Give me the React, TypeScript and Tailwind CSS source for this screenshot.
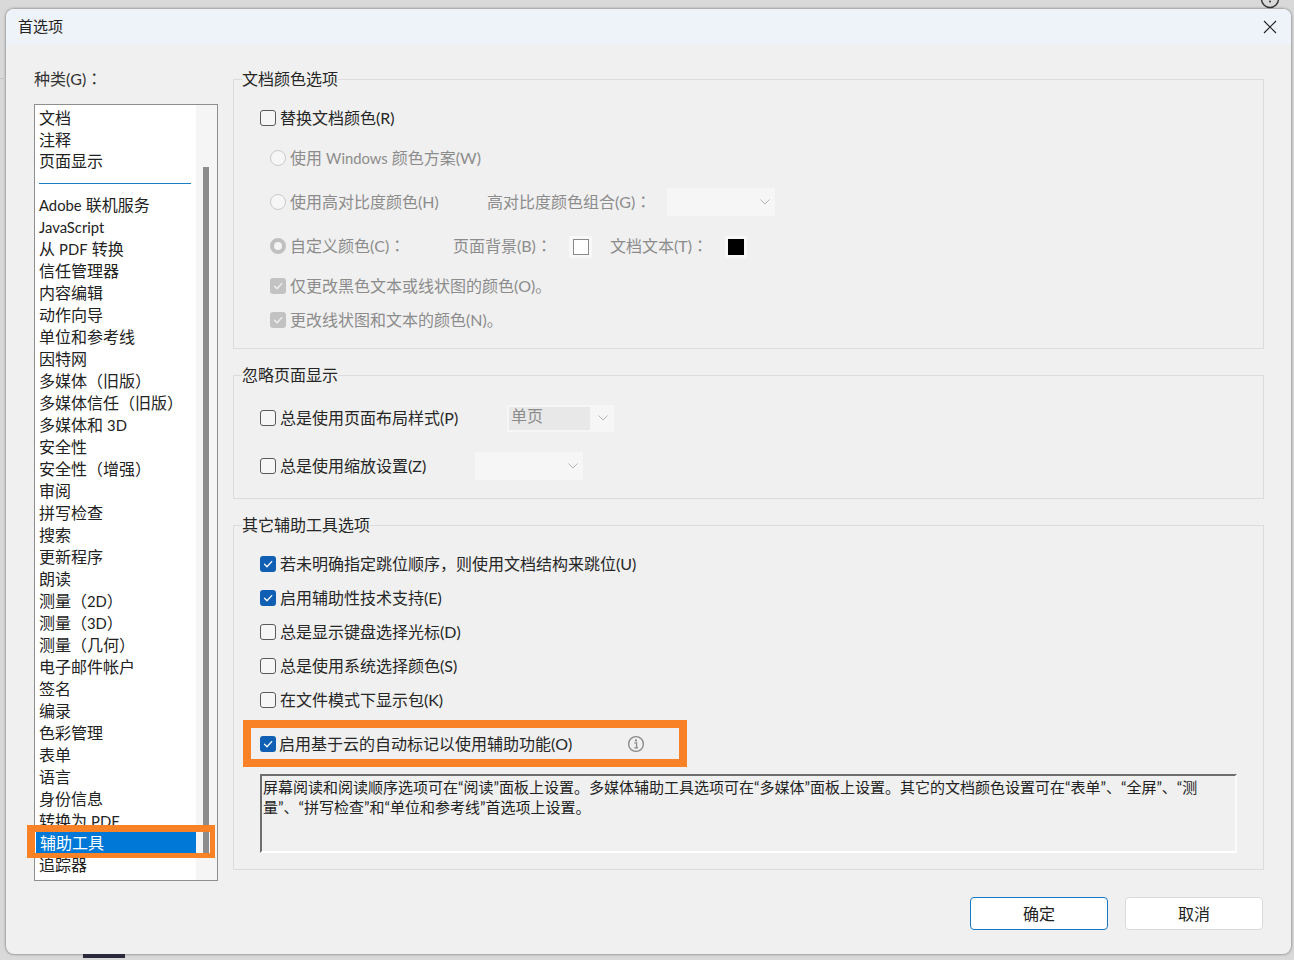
import React from "react";

const topItems = ["文档", "注释", "页面显示"];
const items = ["Adobe 联机服务","JavaScript","从 PDF 转换","信任管理器","内容编辑","动作向导","单位和参考线","因特网","多媒体（旧版）","多媒体信任（旧版）","多媒体和 3D","安全性","安全性（增强）","审阅","拼写检查","搜索","更新程序","朗读","测量（2D）","测量（3D）","测量（几何）","电子邮件帐户","签名","编录","色彩管理","表单","语言","身份信息","转换为 PDF","辅助工具","追踪器"];

function Mixed({ text }: { text: string }) {
  return (
    <>
      {text.split(/([A-Za-z0-9]+)/).map((part, i) =>
        i % 2 === 1 ? <span key={i} className="text-[14.8px]">{part}</span> : <React.Fragment key={i}>{part}</React.Fragment>
      )}
    </>
  );
}

function Tick({ color = "white" }: { color?: string }) {
  return (
    <svg width="12" height="12" viewBox="0 0 12 12" fill="none">
      <path d="M2.5 6.3 L5 8.7 L9.7 3.6" stroke={color} strokeWidth="1.3" strokeLinecap="round" strokeLinejoin="round" />
    </svg>
  );
}

function Check({ state = "off" }: { state?: "off" | "on" | "disabled" }) {
  if (state === "on")
    return <span className="flex h-4 w-4 shrink-0 items-center justify-center rounded-[3px] bg-[#0f5fb5]"><Tick /></span>;
  if (state === "disabled")
    return <span className="flex h-4 w-4 shrink-0 items-center justify-center rounded-[3px] bg-[#c2c2c2]"><Tick color="#f2f2f2" /></span>;
  return <span className="h-4 w-4 shrink-0 rounded-[3px] border border-[#5a5a5a] bg-[#f6f6f6]" />;
}

function Radio({ on = false }: { on?: boolean }) {
  return on ? (
    <span className="h-4 w-4 shrink-0 rounded-full border-[4px] border-[#c0c0c0] bg-[#f4f4f4]" />
  ) : (
    <span className="h-4 w-4 shrink-0 rounded-full border border-[#cbcbcb] bg-[#f6f6f6]" />
  );
}

function Chevron({ className = "" }: { className?: string }) {
  return (
    <svg className={className} width="12" height="8" viewBox="0 0 12 8" fill="none">
      <path d="M1.5 1.5 L6 6 L10.5 1.5" stroke="#b5b5b5" strokeWidth="1" />
    </svg>
  );
}

function Colon() {
  return <span className="font-['Noto_Sans_CJK_TC',sans-serif] leading-none">：</span>;
}

function CheckRow({ label, state, className = "" }: { label: string; state?: "off" | "on" | "disabled"; className?: string }) {
  return (
    <div className={`flex h-6 items-center gap-1 text-[#262626] ${className}`}>
      <Check state={state} />
      <span className="whitespace-nowrap">{label}</span>
    </div>
  );
}

function Section({ title, className, children }: { title: string; className: string; children: React.ReactNode }) {
  return (
    <fieldset className={`w-[1031px] border border-[#dcdcdc] ${className}`}>
      <legend className="ml-2 h-6 leading-6 text-[#262626]">{title}</legend>
      {children}
    </fieldset>
  );
}

export default function App() {
  return (
    <div className="relative h-[960px] w-[1294px] overflow-hidden bg-[#d9d9d9] pl-[6px] pt-[9px] font-['Lato','Noto_Sans_CJK_SC',sans-serif] text-[16px]">
      <svg className="absolute left-[1260px] top-[-11px]" width="20" height="20" viewBox="0 0 20 20" fill="none">
        <circle cx="10" cy="10" r="8.5" stroke="#333" strokeWidth="1.4" />
        <circle cx="10" cy="12.5" r="1" fill="#333" />
      </svg>
      <div className="absolute left-0 top-[78px] h-px w-[6px] bg-[#c4c4c4]" />
      <div className="absolute bottom-[2px] left-[83px] h-1 w-[42px] bg-[#2a2a3a]" />

      <div className="h-[945px] w-[1285px] overflow-hidden rounded-lg bg-[#f0f0f0] shadow-[0_0_3px_rgba(0,0,0,0.55)]">
        <div className="flex h-9 items-center justify-between bg-[#eef3fa] pl-3 pr-[14px] text-[15px] text-[#222]">
          <span className="mb-[2px]">首选项</span>
          <svg width="14" height="14" viewBox="0 0 14 14" fill="none">
            <path d="M1 1 L13 13 M13 1 L1 13" stroke="#222" strokeWidth="1.1" />
          </svg>
        </div>

        <div className="flex pl-[28px] pt-[22px]">
          <div className="w-[184px]">
            <div className="h-6 leading-6 text-[#333]">种类(G)<Colon /></div>
            <div className="relative mt-[13px] flex h-[777px] border border-[#8e8e8e] bg-white text-[#222]">
              <div className="w-[161px] pt-[2px]">
                {topItems.map((t) => (
                  <div key={t} className="h-[21.7px] pl-1 leading-[21.7px]">{t}</div>
                ))}
                <div className="flex h-[21.9px] items-center pl-1 pr-1"><div className="h-px w-[152px] bg-[#1b7fc4]" /></div>
                {items.map((t) =>
                  t === "辅助工具" ? (
                    <div key={t} className="ml-px h-[22px] bg-[#0078d7] pl-1 leading-[22px] text-white">{t}</div>
                  ) : (
                    <div key={t} className="h-[22px] whitespace-nowrap pl-1 leading-[22px]"><Mixed text={t} /></div>
                  )
                )}
              </div>
              <div className="h-full w-[21px] bg-[#f5f5f5] pl-[7px] pt-[62px]">
                <div className="h-[686px] w-[6px] bg-[#8c8c8c]" />
              </div>
              <div className="absolute left-[-8px] top-[720px] h-[33px] w-[188px] border-b-[5px] border-l-[8px] border-r-[5px] border-t-[7px] border-[#fa8226]" />
            </div>
          </div>

          <div className="ml-[15px] w-[1031px]">
            <Section title="文档颜色选项" className="h-[282px]">
              <CheckRow label="替换文档颜色(R)" className="ml-[26px] mt-[15px]" />
              <div className="ml-9 mt-4 flex h-6 items-center gap-1 text-[#8c8c8c]">
                <Radio /><span>使用 <span className="text-[14.8px]">Windows</span> 颜色方案(W)</span>
              </div>
              <div className="ml-9 mt-5 flex h-6 items-center text-[#8c8c8c]">
                <Radio />
                <span className="ml-1 w-[197px]">使用高对比度颜色(H)</span>
                <span className="w-[180px] whitespace-nowrap">高对比度颜色组合(G)<Colon /></span>
                <div className="flex h-7 w-[108px] items-center justify-end bg-[#f6f6f6] pr-[4px]"><Chevron /></div>
              </div>
              <div className="ml-9 mt-5 flex h-6 items-center text-[#8c8c8c]">
                <Radio on />
                <span className="ml-1 w-[163px] whitespace-nowrap">自定义颜色(C)<Colon /></span>
                <span className="w-[116px] whitespace-nowrap">页面背景(B)<Colon /></span>
                <div className="mt-px flex h-[22px] w-[23px] items-center justify-center bg-[#f8f8f8]"><div className="h-4 w-4 border border-[#8a8a8a] bg-white" /></div>
                <span className="ml-[18px] w-[115px] whitespace-nowrap">文档文本(T)<Colon /></span>
                <div className="mt-px flex h-[22px] w-[22px] items-center justify-center bg-[#f8f8f8]"><div className="h-4 w-4 bg-black" /></div>
              </div>
              <div className="ml-9 mt-4 flex h-6 items-center gap-1 text-[#8c8c8c]">
                <Check state="disabled" /><span>仅更改黑色文本或线状图的颜色(O)。</span>
              </div>
              <div className="ml-9 mt-[10px] flex h-6 items-center gap-1 text-[#8c8c8c]">
                <Check state="disabled" /><span>更改线状图和文本的颜色(N)。</span>
              </div>
            </Section>

            <Section title="忽略页面显示" className="mt-[14px] h-[136px]">
              <div className="ml-[26px] mt-[19px] flex h-6 items-center">
                <CheckRow label="总是使用页面布局样式(P)" className="w-[247px]" />
                <div className="flex h-[27px] w-[107px] items-center bg-[#f6f6f6] pl-[2px]">
                  <div className="flex h-[23px] w-[81px] items-center bg-[#e8e8e8] pb-1 pl-[2px] text-[#8c8c8c]">单页</div>
                  <Chevron className="ml-[7px]" />
                </div>
              </div>
              <div className="ml-[26px] mt-6 flex h-6 items-center">
                <CheckRow label="总是使用缩放设置(Z)" className="w-[215px]" />
                <div className="flex h-7 w-[108px] items-center justify-end bg-[#f6f6f6] pr-[4px]"><Chevron /></div>
              </div>
            </Section>

            <Section title="其它辅助工具选项" className="mt-[14px] h-[357px]">
              <CheckRow state="on" label="若未明确指定跳位顺序，则使用文档结构来跳位(U)" className="ml-[26px] mt-[15px]" />
              <CheckRow state="on" label="启用辅助性技术支持(E)" className="ml-[26px] mt-[10px]" />
              <CheckRow label="总是显示键盘选择光标(D)" className="ml-[26px] mt-[10px]" />
              <CheckRow label="总是使用系统选择颜色(S)" className="ml-[26px] mt-[10px]" />
              <CheckRow label="在文件模式下显示包(K)" className="ml-[26px] mt-[10px]" />
              <div className="ml-[9px] mt-2 flex h-[47px] w-[444px] items-center border-[8px] border-[#fa8226] pl-[9px] text-[#262626]">
                <Check state="on" />
                <span className="ml-[3px] w-[348px] whitespace-nowrap">启用基于云的自动标记以使用辅助功能(O)</span>
                <svg width="18" height="18" viewBox="0 0 18 18" fill="none">
                  <circle cx="9" cy="9" r="7.4" stroke="#8a8a8a" strokeWidth="1.4" />
                  <circle cx="9" cy="5.4" r="1.1" fill="#8a8a8a" />
                  <path d="M7.3 7.9 H9.6 V12.6 M7.3 12.8 H11" stroke="#8a8a8a" strokeWidth="1.3" />
                </svg>
              </div>
              <div className="ml-[26px] mt-[7px] h-[79px] w-[977px] border-2 border-b-white border-l-[#6e6e6e] border-r-[#fafafa] border-t-[#6e6e6e] pl-px pr-[22px] pt-px text-[15px] leading-5 text-[#222]">
                屏幕阅读和阅读顺序选项可在“阅读”面板上设置。多媒体辅助工具选项可在“多媒体”面板上设置。其它的文档颜色设置可在“表单”、“全屏”、“测量”、“拼写检查”和“单位和参考线”首选项上设置。
              </div>
            </Section>

            <div className="mr-px mt-[27px] flex justify-end gap-[17px]">
              <button className="h-[33px] w-[138px] rounded-[4px] border border-[#1a78c2] bg-white text-[#222]">确定</button>
              <button className="h-[33px] w-[138px] rounded-[4px] border border-[#dadada] bg-white text-[#222]">取消</button>
            </div>
          </div>
        </div>
      </div>
    </div>
  );
}
